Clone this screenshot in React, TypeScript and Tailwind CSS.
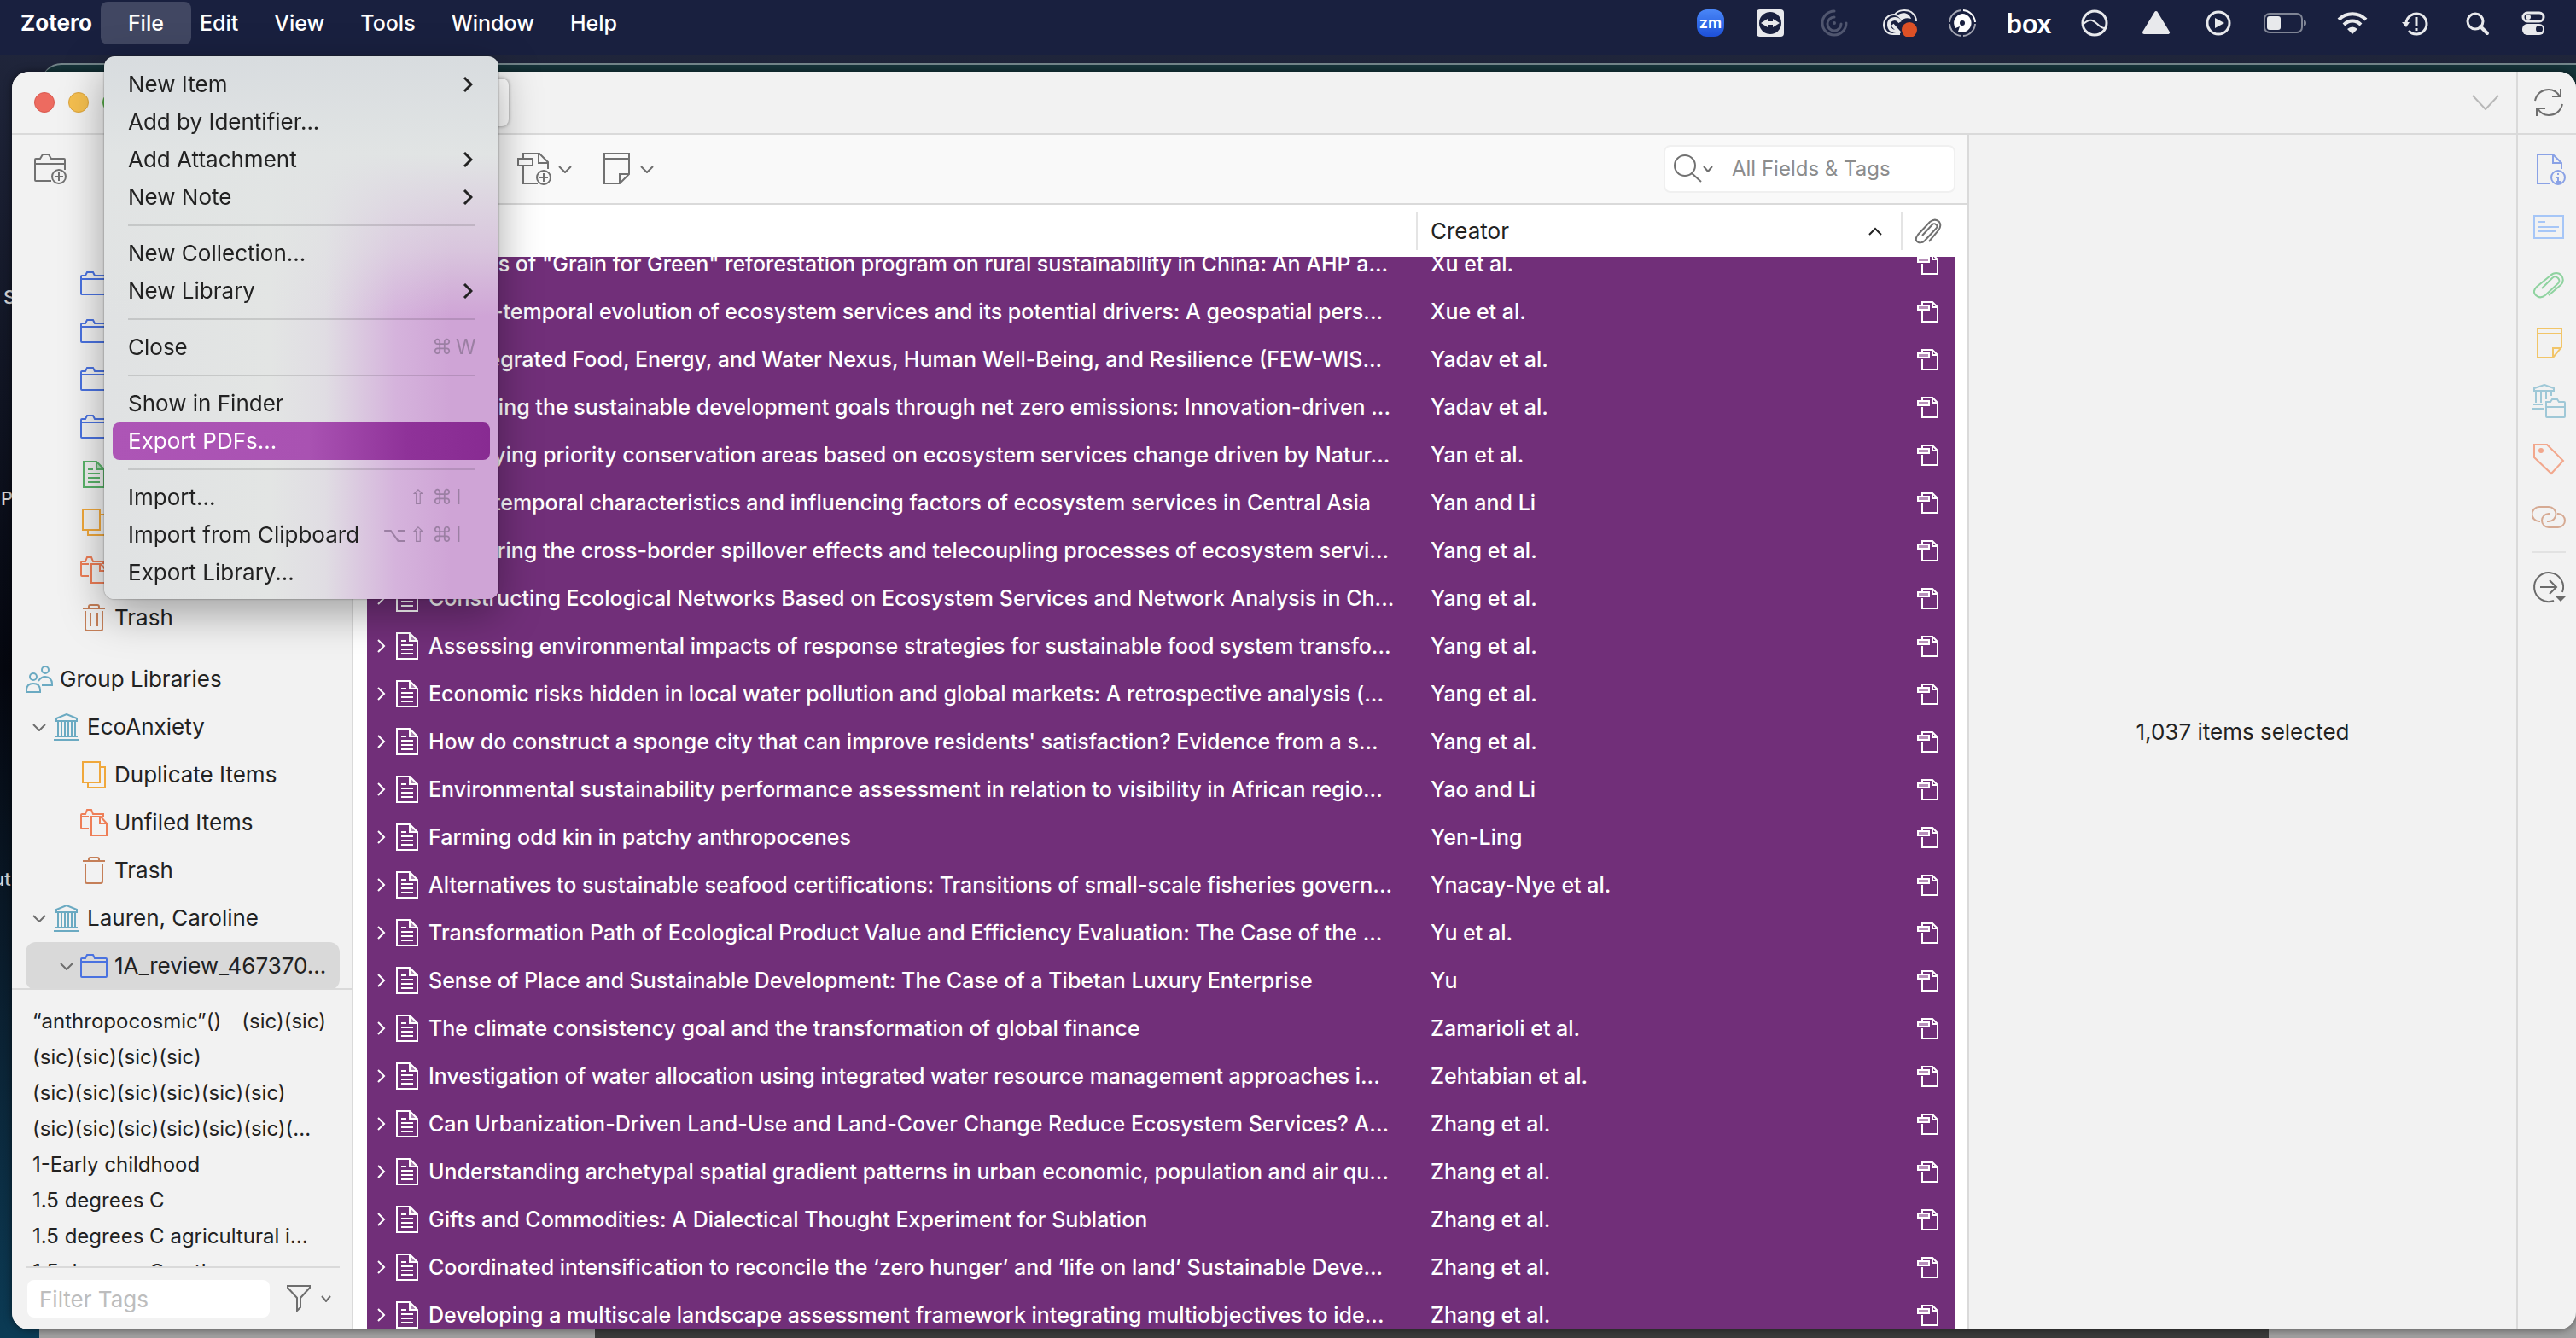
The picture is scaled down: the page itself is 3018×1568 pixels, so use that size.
import { useLayoutEffect, useRef, type ReactNode } from 'react';

interface Item {
  title: string;
  creator: string;
}

interface TreeRow {
  icon: ReactNode;
  label: string;
  level: number;
  open?: boolean;
  selected?: boolean;
}

interface MenuEntry {
  label: string;
  submenu?: boolean;
  modifiers?: string[];
  shortcutKey?: string;
  active?: boolean;
}

const ITEMS: Item[] = [
  { title: 'Impacts of "Grain for Green" reforestation program on rural sustainability in China: An AHP a...', creator: 'Xu et al.' },
  { title: 'Spatio-temporal evolution of ecosystem services and its potential drivers: A geospatial pers...', creator: 'Xue et al.' },
  { title: 'An Integrated Food, Energy, and Water Nexus, Human Well-Being, and Resilience (FEW-WIS...', creator: 'Yadav et al.' },
  { title: 'Achieving the sustainable development goals through net zero emissions: Innovation-driven ...', creator: 'Yadav et al.' },
  { title: 'Identifying priority conservation areas based on ecosystem services change driven by Natur...', creator: 'Yan et al.' },
  { title: 'Spatiotemporal characteristics and influencing factors of ecosystem services in Central Asia', creator: 'Yan and Li' },
  { title: 'Measuring the cross-border spillover effects and telecoupling processes of ecosystem servi...', creator: 'Yang et al.' },
  { title: 'Constructing Ecological Networks Based on Ecosystem Services and Network Analysis in Ch...', creator: 'Yang et al.' },
  { title: 'Assessing environmental impacts of response strategies for sustainable food system transfo...', creator: 'Yang et al.' },
  { title: 'Economic risks hidden in local water pollution and global markets: A retrospective analysis (...', creator: 'Yang et al.' },
  { title: "How do construct a sponge city that can improve residents' satisfaction? Evidence from a s...", creator: 'Yang et al.' },
  { title: 'Environmental sustainability performance assessment in relation to visibility in African regio...', creator: 'Yao and Li' },
  { title: 'Farming odd kin in patchy anthropocenes', creator: 'Yen-Ling' },
  { title: 'Alternatives to sustainable seafood certifications: Transitions of small-scale fisheries govern...', creator: 'Ynacay-Nye et al.' },
  { title: 'Transformation Path of Ecological Product Value and Efficiency Evaluation: The Case of the ...', creator: 'Yu et al.' },
  { title: 'Sense of Place and Sustainable Development: The Case of a Tibetan Luxury Enterprise', creator: 'Yu' },
  { title: 'The climate consistency goal and the transformation of global finance', creator: 'Zamarioli et al.' },
  { title: 'Investigation of water allocation using integrated water resource management approaches i...', creator: 'Zehtabian et al.' },
  { title: 'Can Urbanization-Driven Land-Use and Land-Cover Change Reduce Ecosystem Services? A...', creator: 'Zhang et al.' },
  { title: 'Understanding archetypal spatial gradient patterns in urban economic, population and air qu...', creator: 'Zhang et al.' },
  { title: 'Gifts and Commodities: A Dialectical Thought Experiment for Sublation', creator: 'Zhang et al.' },
  { title: 'Coordinated intensification to reconcile the ‘zero hunger’ and ‘life on land’ Sustainable Deve...', creator: 'Zhang et al.' },
  { title: 'Developing a multiscale landscape assessment framework integrating multiobjectives to ide...', creator: 'Zhang et al.' },
];

const TAGS: string[][] = [
  ['“anthropocosmic”()', '(sic)(sic)'],
  ['(sic)(sic)(sic)(sic)'],
  ['(sic)(sic)(sic)(sic)(sic)(sic)'],
  ['(sic)(sic)(sic)(sic)(sic)(sic)(...'],
  ['1-Early childhood'],
  ['1.5 degrees C'],
  ['1.5 degrees C agricultural i...'],
  ['1.5 degrees C pathway'],
];

const MENU_GROUPS: MenuEntry[][] = [
  [
    { label: 'New Item', submenu: true },
    { label: 'Add by Identifier...' },
    { label: 'Add Attachment', submenu: true },
    { label: 'New Note', submenu: true },
  ],
  [{ label: 'New Collection...' }, { label: 'New Library', submenu: true }],
  [{ label: 'Close', modifiers: ['⌘'], shortcutKey: 'W' }],
  [{ label: 'Show in Finder' }, { label: 'Export PDFs...', active: true }],
  [
    { label: 'Import...', modifiers: ['⇧', '⌘'], shortcutKey: 'I' },
    { label: 'Import from Clipboard', modifiers: ['⌥', '⇧', '⌘'], shortcutKey: 'I' },
    { label: 'Export Library...' },
  ],
];

function Glyph({ w, h, className = '', sw = 2, children }: { w: number; h: number; className?: string; sw?: number; children: ReactNode }) {
  return (
    <svg
      width={w}
      height={h}
      viewBox={`0 0 ${w} ${h}`}
      fill="none"
      stroke="currentColor"
      strokeWidth={sw}
      className={`shrink-0 ${className}`}
      aria-hidden="true"
    >
      {children}
    </svg>
  );
}

/* ---------- library icons ---------- */

const FolderIcon = () => (
  <Glyph w={32} h={28} className="text-[#4a72e0]">
    <path d="M1 26V6q0-1 1-1h4l2-4h7l2 4h13q1 0 1 1v20q0 1-1 1H2q-1 0-1-1zM1 9h30" />
  </Glyph>
);

const DocIcon = ({ className = '' }: { className?: string }) => (
  <Glyph w={26} h={32} className={className}>
    <path d="M16 1l9 9h-9z" fill="currentColor" fillOpacity="0.4" stroke="none" />
    <path d="M1 1h15l9 9v21H1zM16 1v9h9M6 10h6M6 15h14M6 20h14M6 25h14" />
  </Glyph>
);

const DuplicateIcon = () => (
  <Glyph w={28} h={32} className="text-[#f0a83c]">
    <path d="M1 1h20v24H1zM22 7h5v24H7v-6" />
  </Glyph>
);

const UnfiledIcon = () => (
  <Glyph w={32} h={32} className="text-[#ee7e57]">
    <path d="M10 23H2q-1 0-1-1V7q0-1 1-1h4l2-5h5l2 5h12v3M1 9h9" />
    <path d="M13 9h11l7 8v14H13zM23 9v8h8" />
  </Glyph>
);

const TrashIcon = ({ full = false }: { full?: boolean }) => (
  <Glyph w={26} h={32} className="text-[#c57f58]">
    <path d="M0 5h26M7 5V3q0-2 2-2h8q2 0 2 2v2M3 8v21q0 2 2 2h16q2 0 2-2V8" />
    {full && <path d="M9 10v16M17 10v16" />}
  </Glyph>
);

const LibraryIcon = () => (
  <Glyph w={30} h={32} className="text-[#6baac2]">
    <path d="M3 9V6l12-5 12 5v3zM5 9v17M9 9v17M13 9v17M17 9v17M21 9v17M25 9v17M2 27h26M0 31h30" />
  </Glyph>
);

const GroupIcon = () => (
  <Glyph w={32} h={32} className="text-[#6baac2]">
    <circle cx="9" cy="13" r="4" />
    <path d="M1 31v-2c0-5 3-8 8-8s8 3 8 8v2z" />
    <circle cx="23" cy="5" r="4" />
    <path d="M15 18c2-3 4-5 8-5 5 0 8 4 8 8v2H19" />
  </Glyph>
);

const ChevronDown = ({ w = 16, h = 9, className = 'text-[#6e6e6e]' }: { w?: number; h?: number; className?: string }) => (
  <Glyph w={w} h={h} className={className}>
    <path d={`M1 1l${w / 2 - 1} ${h - 2} ${w / 2 - 1} -${h - 2}`} />
  </Glyph>
);

const PdfIcon = () => (
  <Glyph w={25} h={25} className="text-white">
    <path d="M6 4V1h12l6 6v17H6V12M18 1v6h6" />
    <path d="M1 5h13v5H1z" fill="#b78fb9" />
  </Glyph>
);

const ClipIcon = ({ className = '' }: { className?: string }) => (
  <Glyph w={36} h={32} className={className}>
    <path d="M18 28L32 16c4-4 3-8 1-11-3-4-9-4-13 0L4 18c-4 4-4 7-1 10s7 3 11 0l14-13c3-2 3-5 1-7s-5-2-7 0L10 20" />
  </Glyph>
);

/* ---------- menu bar ---------- */

function StatusIcons() {
  return (
    <div className="flex h-[54px] items-center gap-9 pr-9 text-[#e8e9ec]">
      <span className="flex size-8 items-center justify-center rounded-xl bg-linear-to-b from-[#4a86f7] to-[#1d4fd8] text-lg leading-none font-semibold text-white">
        zm
      </span>
      <Glyph w={36} h={32}>
        <rect x="2" y="0" width="32" height="32" rx="4" fill="currentColor" stroke="none" />
        <circle cx="18" cy="16" r="13" fill="#19203f" stroke="none" />
        <path d="M7 16l8-5v3h6v-3l8 5-8 5v-3h-6v3z" fill="currentColor" stroke="none" />
      </Glyph>
      <Glyph w={42} h={32} className="text-[#50566f]" sw={3}>
        <path d="M21 2a14 14 0 1 0 14 14M21 9a8 8 0 1 0 8 8" strokeLinecap="round" />
        <circle cx="21" cy="16" r="2" fill="currentColor" stroke="none" />
      </Glyph>
      <Glyph w={40} h={32}>
        <path d="M14 6C18 0 28 0 33 3c4 3 6 7 6 11" />
        <path d="M17 7c6-5 14-3 16 4-6-2-9 0-12 2-1-3-3-4-4-6z" fill="currentColor" stroke="none" />
        <path d="M20 29h-8C5 29 1 24 1 18S6 6 13 6c4 0 6 2 8 4" />
        <path d="M19 26c-8 1-12-3-12-8 0-8 10-9 13-3M20 28l-9-10" strokeWidth="4" />
        <circle cx="31" cy="24" r="9" fill="#dd5126" stroke="none" />
      </Glyph>
      <Glyph w={34} h={32} className="text-white">
        <path d="M18 1a15 15 0 0 1 14 14" />
        <path d="M32 17a15 15 0 0 1-14 14M16 31A15 15 0 0 1 2 17M2 15A15 15 0 0 1 16 1" strokeOpacity="0.6" />
        <path d="M17 5a11 11 0 1 1-5 21l2-6-5 2A11 11 0 0 1 17 5z" fill="currentColor" stroke="none" />
        <circle cx="17" cy="16" r="3" fill="#19203f" stroke="none" />
      </Glyph>
      <span className="flex w-[50px] justify-center font-[Lato,sans-serif] text-[32px] leading-8 font-bold text-white">box</span>
      <Glyph w={32} h={32}>
        <circle cx="16" cy="16" r="14" strokeWidth="3" />
        <path d="M3 17c8-7 11-4 16 0 3 3 6 5 9 5" />
      </Glyph>
      <Glyph w={40} h={32}>
        <path d="M20 4l14 23H6z" fill="currentColor" strokeWidth="4" strokeLinejoin="round" />
      </Glyph>
      <Glyph w={34} h={32} sw={3}>
        <circle cx="17" cy="16" r="13" />
        <path d="M13 10l11 6-11 6z" fill="currentColor" stroke="none" />
      </Glyph>
      <Glyph w={50} h={32}>
        <rect x="1" y="5" width="44" height="22" rx="6" strokeOpacity="0.5" />
        <rect x="4" y="8" width="16" height="16" rx="3" fill="currentColor" stroke="none" />
        <path d="M47 12v8q3-1 3-4t-3-4z" fill="currentColor" fillOpacity="0.5" stroke="none" />
      </Glyph>
      <Glyph w={36} h={32} sw={4}>
        <path d="M2 12c9-9 23-9 32 0M8 18c6-6 14-6 20 0" />
        <path d="M12 23q6-5 12 0l-6 6z" fill="currentColor" stroke="none" />
      </Glyph>
      <Glyph w={40} h={32}>
        <path d="M9 16A12 12 0 1 1 12 25" strokeWidth="3" />
        <path d="M4 15h9l-4 6z" fill="currentColor" stroke="none" />
        <path d="M21 9v10M21 22v3" strokeWidth="3" />
      </Glyph>
      <Glyph w={32} h={32} sw={3}>
        <circle cx="14" cy="14" r="9" />
        <path d="M20 20l8 8" strokeWidth="4" strokeLinecap="round" />
      </Glyph>
      <Glyph w={28} h={32}>
        <rect x="2" y="4" width="24" height="10" rx="5" strokeWidth="3" />
        <circle cx="8" cy="9" r="3" fill="currentColor" stroke="none" />
        <rect x="1" y="17" width="26" height="13" rx="6" fill="currentColor" stroke="none" />
        <circle cx="21" cy="23" r="4" fill="#19203f" stroke="none" />
      </Glyph>
    </div>
  );
}

function MenuBar() {
  return (
    <header className="relative flex h-16 items-start justify-between bg-[#19203f] pl-6 text-white">
      <nav className="flex h-[54px] items-center gap-[42px] text-[25px] leading-8 font-medium" aria-label="Application menu">
        <button className="text-[26px] font-bold">Zotero</button>
        <button className="-mx-8 h-[50px] rounded-lg bg-[#414762] px-8" aria-expanded="true">File</button>
        <button>Edit</button>
        <button>View</button>
        <button>Tools</button>
        <button>Window</button>
        <button>Help</button>
      </nav>
      <StatusIcons />
    </header>
  );
}

function FileMenu() {
  return (
    <div
      role="menu"
      aria-label="File"
      className="absolute top-[66px] left-[122px] z-30 w-[462px] rounded-xl bg-[linear-gradient(180deg,#d8dcdf_0%,#e1e4e4_18%,#e2e5e480_36%,transparent_48%),linear-gradient(90deg,#e0e2e3_0%,#e3e5e4_42%,#e0dde3_56%,#d5b3dc_74%,#cfa4d6_88%)] px-[10px] pt-[11px] pb-[9px] text-[26px] leading-8 text-[#222] shadow-[0_16px_50px_rgba(0,0,0,0.35),0_0_2px_rgba(0,0,0,0.5)]"
    >
      {MENU_GROUPS.map((group, i) => (
        <div key={i}>
          {i > 0 && <div role="separator" className="mx-[18px] my-[10px] h-[2px] bg-black/12" />}
          {group.map((entry) => (
            <button
              key={entry.label}
              role="menuitem"
              className={`flex h-11 w-full items-center justify-between rounded-lg pr-[14px] pl-[18px] ${
                entry.active ? 'bg-[linear-gradient(90deg,#ad55b6_0%,#a952b2_52%,#8f3299_78%,#882b92_100%)] text-white' : ''
              }`}
            >
              <span className="whitespace-nowrap">{entry.label}</span>
              {entry.submenu && (
                <Glyph w={12} h={18} sw={3} className="mr-[6px]">
                  <path d="M2 1l8 8-8 8" />
                </Glyph>
              )}
              {entry.shortcutKey && (
                <span className="flex items-center text-[#9b7fa3]">
                  {entry.modifiers?.map((m) => (
                    <span key={m} className="w-7 text-center font-['DejaVu_Sans'] text-2xl leading-8">{m}</span>
                  ))}
                  <span className="w-7 pl-[2px] text-left text-2xl leading-8">{entry.shortcutKey}</span>
                </span>
              )}
            </button>
          ))}
        </div>
      ))}
    </div>
  );
}

/* ---------- left pane ---------- */

const TREE: TreeRow[] = [
  { icon: <FolderIcon />, label: '', level: 2 },
  { icon: <FolderIcon />, label: '', level: 2 },
  { icon: <FolderIcon />, label: '', level: 2 },
  { icon: <FolderIcon />, label: '', level: 2 },
  { icon: <DocIcon className="text-[#59b369]" />, label: '', level: 2 },
  { icon: <DuplicateIcon />, label: '', level: 2 },
  { icon: <UnfiledIcon />, label: '', level: 2 },
  { icon: <TrashIcon full />, label: 'Trash', level: 2 },
  { icon: <GroupIcon />, label: 'Group Libraries', level: 0 },
  { icon: <LibraryIcon />, label: 'EcoAnxiety', level: 1, open: true },
  { icon: <DuplicateIcon />, label: 'Duplicate Items', level: 2 },
  { icon: <UnfiledIcon />, label: 'Unfiled Items', level: 2 },
  { icon: <TrashIcon />, label: 'Trash', level: 2 },
  { icon: <LibraryIcon />, label: 'Lauren, Caroline', level: 1, open: true },
  { icon: <FolderIcon />, label: '1A_review_467370...', level: 2, open: true, selected: true },
];

const INDENT = ['pl-0', 'pl-2', 'pl-10'];

function CollectionTree() {
  return (
    <ul role="tree" className="h-[920px] shrink-0 overflow-hidden pt-[66px] pr-[14px] pl-4 text-[26px] leading-8 text-[#222]">
      {TREE.map((row, i) => (
        <li
          key={i}
          role="treeitem"
          aria-selected={row.selected ?? false}
          className={`flex h-14 items-center ${INDENT[row.level]} ${row.level === 0 ? 'mt-4' : ''} ${
            row.selected ? 'rounded-xl bg-[#d9d9d9]' : ''
          }`}
        >
          {row.level > 0 && <span className="flex w-6 shrink-0">{row.open && <ChevronDown />}</span>}
          <span className="flex w-8 shrink-0 items-center justify-center">{row.icon}</span>
          <span className="ml-2 whitespace-nowrap">{row.label}</span>
        </li>
      ))}
    </ul>
  );
}

function TagSelector() {
  return (
    <div className="flex min-h-0 flex-1 flex-col border-t-2 border-[#dadada] pr-[14px] pl-4">
      <ul className="min-h-0 flex-1 overflow-hidden border-b-2 border-[#dadada] pt-4 pl-2 text-2xl leading-[42px] text-[#222]">
        {TAGS.map((line) => (
          <li key={line.join()} className="flex gap-6 text-2xl leading-[42px] whitespace-nowrap">
            {line.map((tag) => (
              <span key={tag}>{tag}</span>
            ))}
          </li>
        ))}
      </ul>
      <div className="flex h-[72px] shrink-0 items-center">
        <input
          aria-label="Filter Tags"
          placeholder="Filter Tags"
          className="ml-[2px] h-11 w-[284px] rounded-lg bg-white px-[14px] text-[26px] leading-8 placeholder:text-[#bdbdbd]"
        />
        <button className="ml-5 flex items-center gap-3" aria-label="Tag actions">
          <Glyph w={28} h={32} className="text-[#6e6e6e]">
            <path d="M1 1h26v2L16 15v11l-4 4V15L1 3z" />
          </Glyph>
          <ChevronDown w={12} h={8} />
        </button>
      </div>
    </div>
  );
}

function LeftPane() {
  return (
    <aside className="flex w-[400px] shrink-0 flex-col border-r-2 border-[#dadada] bg-[#f2f2f2]">
      <div className="flex h-20 shrink-0 items-center pl-[26px]">
        <button aria-label="New Collection">
          <Glyph w={40} h={40} className="text-[#717171]">
            <path d="M20 34H2q-1 0-1-1V9q0-1 1-1h5l3-5h7l3 5h15q1 0 1 1v12M1 14h35" />
            <circle cx="29" cy="29" r="8" />
            <path d="M29 24v10M24 29h10" />
          </Glyph>
        </button>
      </div>
      <CollectionTree />
      <TagSelector />
    </aside>
  );
}

/* ---------- items ---------- */

function ItemsToolbar() {
  return (
    <div className="flex h-[82px] shrink-0 items-center justify-between border-b-2 border-[#dadada] bg-[#f9f9f9] pr-[14px] pl-48 text-[#717171]">
      <div className="flex items-center gap-9">
        <button className="flex items-center gap-2" aria-label="Add Attachment">
          <Glyph w={40} h={40}>
            <path d="M7 7V2h19l10 10v8M25 2v11h11M24 37H7V17" />
            <path d="M1 8h17v8H1z" />
            <circle cx="31" cy="30" r="8" />
            <path d="M31 25v10M26 30h10" />
          </Glyph>
          <ChevronDown />
        </button>
        <button className="flex items-center gap-3" aria-label="New Note">
          <Glyph w={32} h={40}>
            <path d="M2 2h29v24L20 37H2zM2 8h29M20 37V26h11" />
          </Glyph>
          <ChevronDown />
        </button>
      </div>
      <label className="flex h-14 w-[342px] items-center rounded-lg border-2 border-[#f0f0f0] bg-white pl-[10px]">
        <Glyph w={34} h={34}>
          <circle cx="13" cy="13" r="12" />
          <path d="M21 22l11 10" />
        </Glyph>
        <ChevronDown w={12} h={8} />
        <input
          aria-label="Search"
          placeholder="All Fields & Tags"
          className="ml-[22px] w-60 min-w-0 text-2xl leading-8 outline-none placeholder:text-[#8c8c8c]"
        />
      </label>
    </div>
  );
}

function ItemsTable() {
  const scroller = useRef<HTMLDivElement>(null);

  useLayoutEffect(() => {
    if (scroller.current) scroller.current.scrollTop = 20;
  }, []);

  return (
    <div ref={scroller} className="min-h-0 flex-1 overflow-hidden bg-white pr-[14px] pl-4">
      <table className="w-full table-fixed border-separate border-spacing-0 text-left text-[25px] leading-8">
        <colgroup>
          <col />
          <col className="w-[568px]" />
          <col className="w-16" />
        </colgroup>
        <thead className="sticky top-0 z-10 bg-white text-[26px] leading-8 text-[#222]">
          <tr className="h-[61px]">
            <th aria-label="Title" />
            <th className="font-normal">
              <div className="flex h-11 items-center justify-between border-l-2 border-[#e4e4e4] pr-[22px] pl-[15px]">
                Creator
                <Glyph w={16} h={10}>
                  <path d="M1 9l7-7 7 7" />
                </Glyph>
              </div>
            </th>
            <th aria-label="Attachments">
              <div className="flex h-11 items-center border-l-2 border-[#e4e4e4] pl-[14px]">
                <Glyph w={32} h={30} className="text-[#717171]">
                  <path d="M17 27L28 14c3-4 3-7 1-10-3-3-7-3-11 0L4 19c-3 4-3 6-1 8s6 2 9-1l13-14c2-2 2-4 0-5-1-1-3-1-4 0L9 20" />
                </Glyph>
              </div>
            </th>
          </tr>
        </thead>
        <tbody className="bg-[#712f79] font-medium text-white">
          {ITEMS.map((item) => (
            <tr key={item.title} className="h-14">
              <td>
                <div className="flex items-center pl-3 whitespace-nowrap">
                  <Glyph w={10} h={16}>
                    <path d="M1 1l7 7-7 7" />
                  </Glyph>
                  <DocIcon className="mx-3" />
                  {item.title}
                </div>
              </td>
              <td className="pl-[17px]">{item.creator}</td>
              <td className="pl-[19px]">
                <PdfIcon />
              </td>
            </tr>
          ))}
        </tbody>
      </table>
    </div>
  );
}

/* ---------- right pane ---------- */

const SIDENAV: { name: string; icon: ReactNode }[] = [
  {
    name: 'Info',
    icon: (
      <Glyph w={40} h={40} className="text-[#8aa2e6]">
        <path d="M22 37H7V3h18l10 10v7M25 3v10h10" />
        <circle cx="31" cy="30" r="8" />
        <path d="M31 25v2M28 30h3v5M28 35h6" />
      </Glyph>
    ),
  },
  {
    name: 'Abstract',
    icon: (
      <Glyph w={40} h={40} className="text-[#a6c6f7]">
        <path d="M3 7h34v26H3zM8 14h8M8 20h24M8 25h20" />
      </Glyph>
    ),
  },
  { name: 'Attachments', icon: <ClipIcon className="text-[#8fd3a0]" /> },
  {
    name: 'Notes',
    icon: (
      <Glyph w={40} h={40} className="text-[#f2c568]">
        <path d="M7 3h28v22L25 37H7zM7 9h28M25 37V26h10" />
      </Glyph>
    ),
  },
  {
    name: 'Libraries and Collections',
    icon: (
      <Glyph w={40} h={40} className="text-[#9fc8d7]">
        <path d="M3 8V5l12-4 11 4v3zM5 9v13M11 9v13M17 9v9M23 9v5M2 24h11M0 29h14" />
        <path d="M17 21h5l2-3h6l2 3h6q1 0 1 1v16q0 1-1 1H18q-1 0-1-1zM17 27h22" />
      </Glyph>
    ),
  },
  {
    name: 'Tags',
    icon: (
      <Glyph w={40} h={40} className="text-[#f2a78c]">
        <path d="M3 3h15l19 19-14 15L3 18z" />
        <circle cx="11" cy="10" r="2" fill="currentColor" />
      </Glyph>
    ),
  },
  {
    name: 'Related',
    icon: (
      <Glyph w={40} h={40} className="text-[#d6aa93]">
        <path d="M10 25H9A8 8 0 0 1 9 8h11a8 8 0 0 1 0 17h-2M30 16h1a8 8 0 0 1 0 16H20a8 8 0 0 1 0-16h2" />
      </Glyph>
    ),
  },
];

function SideNav() {
  return (
    <nav className="flex w-[70px] shrink-0 flex-col items-center gap-7 border-l-2 border-[#dadada] pt-5 pl-1" aria-label="Item sections">
      {SIDENAV.map((entry) => (
        <button key={entry.name} aria-label={entry.name} className="flex size-10 items-center justify-center">
          {entry.icon}
        </button>
      ))}
      <div className="-mt-2 -mb-2 h-[2px] w-10 bg-[#e2e2e2]" />
      <button aria-label="Locate" className="size-10">
        <Glyph w={40} h={40} className="text-[#6a6a6a]">
          <path d="M26 36A17 17 0 1 1 36 26M10 20h18M21 12l8 8-8 8" />
          <path d="M28 31h12l-6 6z" fill="currentColor" stroke="none" />
        </Glyph>
      </button>
    </nav>
  );
}

function TitleBar() {
  return (
    <div className="flex h-[74px] shrink-0 border-b-2 border-[#dadada] bg-[#f2f2f2]">
      <div className="flex flex-1 items-center gap-4 pl-[26px]">
        <span className="size-6 rounded-full border border-[#d9584e] bg-[#ed6b60]" />
        <span className="size-6 rounded-full border border-[#dca33c] bg-[#f5bf4f]" />
        <span className="size-6 rounded-full border border-[#51a73f] bg-[#61c554]" />
        <span className="h-14 w-[436px] rounded-lg bg-white shadow-[0_0_4px_rgba(0,0,0,0.4)]" />
      </div>
      <button className="flex w-[52px] items-center" aria-label="List all tabs">
        <ChevronDown w={32} h={18} className="text-[#b8b8b8]" />
      </button>
      <button className="flex w-[70px] items-center justify-center border-l-2 border-[#dadada] pl-1" aria-label="Sync">
        <Glyph w={36} h={36} className="text-[#6e6e6e]">
          <path d="M2 16C4 7 11 3 18 3c6 0 10 3 13 8M32 2v9H22M34 20c-2 9-9 13-16 13-6 0-10-3-13-8M4 34v-9h10" />
        </Glyph>
      </button>
    </div>
  );
}

/* ---------- desktop ---------- */

function Desktop() {
  return (
    <div className="absolute inset-0 overflow-hidden bg-linear-to-b from-[#22283f] via-[#05070f] to-[#0b3b55]">
      <div className="absolute top-[74px] right-0 left-12 h-24 rounded-tl-3xl border-t-2 border-[#74868b] bg-[#16343a]" />
      <div className="absolute right-0 bottom-0 left-[46px] h-10 bg-[#a0a0a0]" />
      <div className="absolute right-[360px] bottom-0 left-[697px] h-10 bg-[#3b3b3b]" />
      <div className="text-[22px] leading-8 font-medium text-[#d5d5d5]">
        <span className="absolute top-[332px] left-1">S</span>
        <span className="absolute top-[568px] left-px">P</span>
        <span className="absolute top-[1014px] -left-2">ut</span>
      </div>
    </div>
  );
}

export default function App() {
  return (
    <div className="relative flex h-screen flex-col overflow-hidden font-[Inter,'Liberation_Sans',sans-serif]">
      <Desktop />
      <MenuBar />
      <FileMenu />
      <div className="relative mt-5 mb-[10px] ml-[14px] flex min-h-0 flex-1 flex-col overflow-hidden rounded-[20px] bg-[#f2f2f2] shadow-[0_0_10px_rgba(0,0,0,0.5)]">
        <TitleBar />
        <div className="flex min-h-0 flex-1">
          <LeftPane />
          <main className="flex min-w-0 flex-1 flex-col">
            <ItemsToolbar />
            <ItemsTable />
          </main>
          <section className="flex w-[643px] shrink-0 items-center justify-center border-l-2 border-[#dadada] text-[26px] leading-8 text-[#222]">
            1,037 items selected
          </section>
          <SideNav />
        </div>
      </div>
    </div>
  );
}
